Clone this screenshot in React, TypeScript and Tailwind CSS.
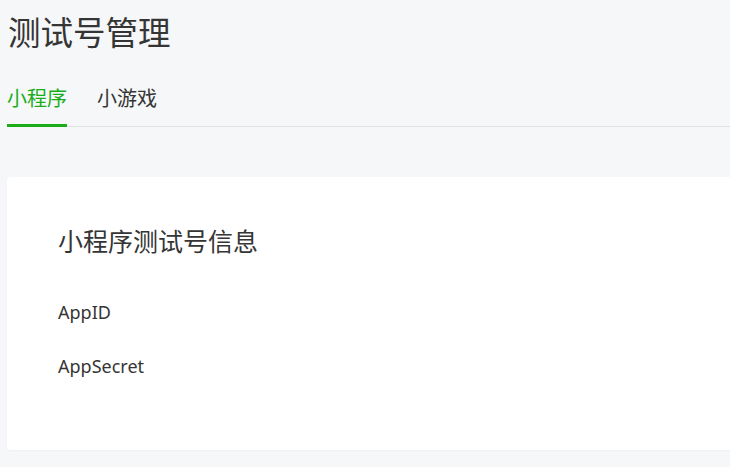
export default function App() {
  return (
    <div
      className="w-[730px] h-[467px] overflow-hidden bg-[#f6f7f9] text-[#353535]"
      style={{ fontFamily: '"Noto Sans", "Noto Sans CJK SC", sans-serif' }}
    >
      <div className="pl-[7px]">
        <h1 className="pl-[1px] pt-[10px] text-[32.5px] leading-[46px] font-normal">测试号管理</h1>

        <div className="mt-[29px] flex gap-[30px] border-b border-[#e0e1e3]">
          <div className="-mb-px border-b-[3px] border-[#1aad19] pb-[11px] text-[20px] leading-[28px] text-[#1aad19]">
            小程序
          </div>
          <div className="pb-[11px] text-[20px] leading-[28px]">小游戏</div>
        </div>

        <div className="mt-[50px] w-[760px] h-[273px] rounded-[4px] bg-white px-[51px] pt-[47px] shadow-[0_1px_2px_rgba(0,0,0,0.03)]">
          <h2 className="text-[25px] leading-[34px] font-normal">小程序测试号信息</h2>
          <div className="mt-[42px] flex flex-col gap-[30px]">
            <div className="text-[18px] leading-[24px]">AppID</div>
            <div className="text-[18px] leading-[24px]">AppSecret</div>
          </div>
        </div>
      </div>
    </div>
  );
}
